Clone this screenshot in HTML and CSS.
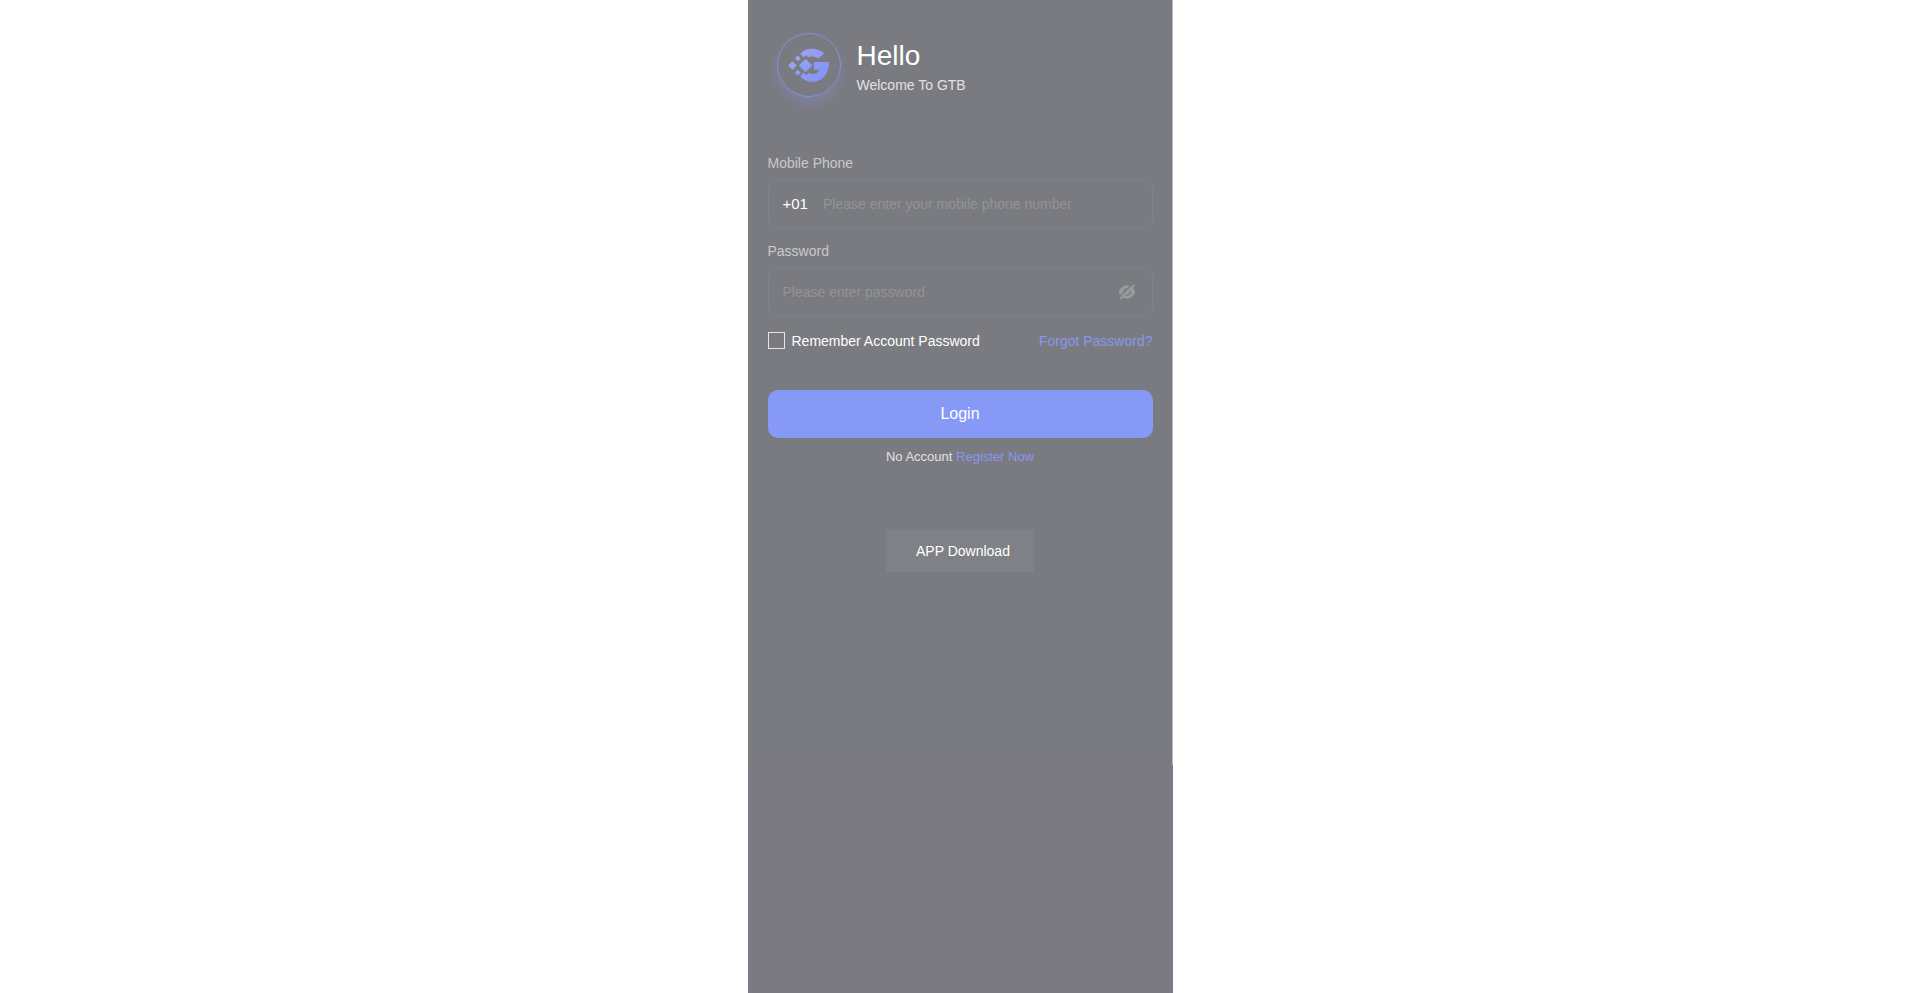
FILE: index.html
```
<!DOCTYPE html>
<html lang="en">
<head>
    <meta charset="UTF-8">
    <meta name="viewport" content="width=device-width, initial-scale=1.0">
    <title>Login</title>
    <link rel="stylesheet" href="styles.css">
</head>
<body>

<main class="page">
    <div class="login">
        <header class="login-header">
            <svg class="logo" viewBox="0 0 64 64" aria-hidden="true">
                <defs>
                    <linearGradient id="logoFill" gradientUnits="userSpaceOnUse" x1="14" y1="16" x2="50" y2="50">
                        <stop offset="0" stop-color="#a0a8ee"/>
                        <stop offset="1" stop-color="#7f90f8"/>
                    </linearGradient>
                </defs>
                <g fill="url(#logoFill)">
                    <path d="M23 20.500C29 13.800 40.500 13.500 47.500 20L41.500 25.500C38.500 22.800 34 22.500 31 24L29 22L26.500 24Z"/>
                    <path d="M37 29H52.500C53.500 40 46 49.500 35.500 49.500C30.500 49.500 26.500 47.500 23 43.500L26.500 40L29 42.500L31.500 40C35.500 42.500 41 41.500 43 37H37Z"/>
                    <path d="M28.500 25.500L35.500 32.500L28.500 39.500L21.500 32.500Z"/>
                    <path d="M15 28L19.500 32.500L15 37L10.500 32.500Z"/>
                    <path d="M20.500 22L23.500 25L20.500 28L17.500 25Z"/>
                    <path d="M20.500 37L23.500 40L20.500 43L17.500 40Z"/>
                </g>
            </svg>
            <div class="welcome">
                <h1>Hello</h1>
                <p>Welcome To GTB</p>
            </div>
        </header>

        <form class="login-form">
            <label class="field-label" for="phone">Mobile Phone</label>
            <div class="field">
                <span class="prefix">+01</span>
                <input type="tel" id="phone" name="phone" placeholder="Please enter your mobile phone number">
            </div>

            <label class="field-label" for="password">Password</label>
            <div class="field">
                <input type="password" id="password" name="password" placeholder="Please enter password">
                <button type="button" class="toggle" id="togglePassword" aria-label="Show password">
                    <svg viewBox="0 0 18 16" width="18" height="16" aria-hidden="true">
                        <path fill="#9a9b9f" d="M9 1.500C5 1.500 2 4 1 8C2 12 5 14.500 9 14.500C13 14.500 16 12 17 8C16 4 13 1.500 9 1.500Z"/>
                        <path fill="none" stroke="#7a7b80" stroke-width="1.500" d="M12 6.500C12.800 9 11.500 11 9 11C8 11 7.300 10.700 6.800 10.200M6 9C5.500 6.500 7 5 9 5"/>
                        <path stroke="#7a7b80" stroke-width="1.500" d="M1 13L15 0"/>
                        <path stroke="#9a9b9f" stroke-width="2" d="M2 15L16.500 1"/>
                    </svg>
                </button>
            </div>

            <div class="options">
                <label class="remember">
                    <input type="checkbox" name="remember">
                    Remember Account Password
                </label>
                <a href="#">Forgot Password?</a>
            </div>

            <button type="submit" class="submit">Login</button>
        </form>

        <p class="register">No Account <a href="#">Register Now</a></p>
        <button type="button" class="download">APP Download</button>
    </div>
</main>

<script>
    document.getElementById("togglePassword").addEventListener("click", function () {
        const password = document.getElementById("password");
        password.type = password.type === "password" ? "text" : "password";
    });
</script>

</body>
</html>
```
FILE: styles.css
```
* {
    box-sizing: border-box;
}
body {
    margin: 0;
    background-color: #fff;
    color: #fff;
    font-family: "Liberation Sans", Arial, sans-serif;
    font-size: 14px;
    line-height: 16px;
}
h1,
p {
    margin: 0;
}
a {
    color: #8896f0;
    text-decoration: none;
}
button,
input {
    font: inherit;
    color: inherit;
}
button {
    border: none;
    cursor: pointer;
}
.page {
    max-width: 425px;
    min-height: 100vh;
    margin: 0 auto;
    background-color: #7b7a82;
}
.login {
    display: flex;
    flex-direction: column;
    min-height: 77vh;
    padding: 33px 19px 32px 20px;
    background-color: #7a7b80;
    border-right: 1px solid #b9b9bd;
}
.login-header {
    display: flex;
    align-items: center;
    gap: 16px;
    padding-left: 9px;
    margin-bottom: 58px;
}
.logo {
    width: 64px;
    height: 64px;
    border: 1px solid #8890dc;
    border-radius: 50%;
    box-shadow: 0 6px 12px rgba(136, 144, 225, 0.35);
}
.welcome h1 {
    margin: 2px 0 5px;
    font-size: 28px;
    font-weight: normal;
    line-height: 32px;
}
.welcome p {
    color: #e2e2e5;
}
.field-label {
    display: block;
    margin-bottom: 9px;
    color: #c9c9cd;
}
.field {
    display: flex;
    align-items: center;
    height: 48px;
    margin-bottom: 15px;
    padding: 0 16px 0 14px;
    border: 1px solid #828388;
    border-radius: 10px;
}
.prefix {
    margin-right: 15px;
    font-size: 15px;
}
.field input {
    flex: 1;
    min-width: 0;
    padding: 0;
    border: none;
    outline: none;
    background: none;
}
.field input::placeholder {
    color: #929398;
    opacity: 1;
}
.toggle {
    display: flex;
    padding: 0;
    background: none;
}
.options {
    display: flex;
    align-items: center;
    justify-content: space-between;
    margin: 16px 0 41px;
}
.remember {
    display: flex;
    align-items: center;
    gap: 7px;
}
.remember input {
    appearance: none;
    width: 17px;
    height: 17px;
    margin: 0;
    border: 1px solid #e6e6e8;
}
.remember input:checked {
    background-color: #8799f6;
}
.submit {
    width: 100%;
    height: 48px;
    border-radius: 10px;
    background-color: #8799f6;
    font-size: 16px;
}
.register {
    margin: 11px 0 65px;
    color: #e2e2e5;
    font-size: 13px;
    text-align: center;
}
.download {
    align-self: center;
    padding: 13px 24px 13px 30px;
    border-radius: 2px;
    background-color: #808186;
}
```
